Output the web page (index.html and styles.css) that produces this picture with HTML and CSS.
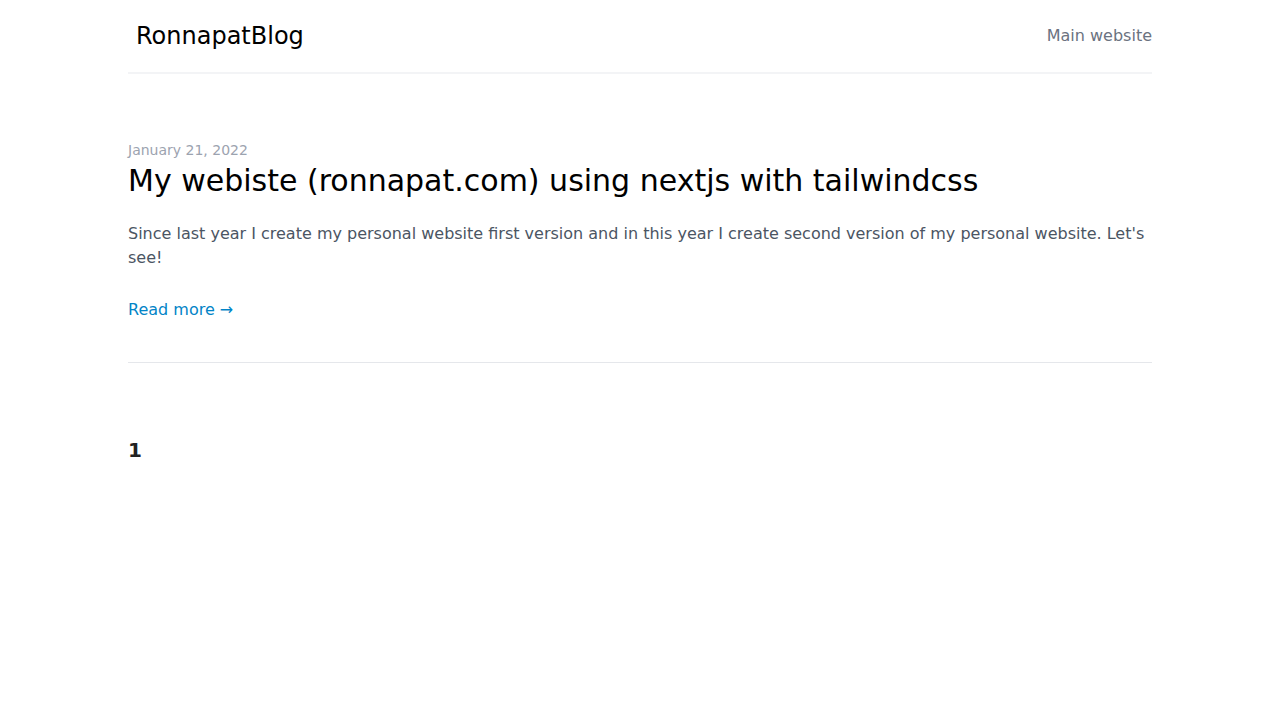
FILE: index.html
```html
<!DOCTYPE html>
<html lang="en">
<head>
<meta charset="utf-8">
<title>RonnapatBlog</title>
<link rel="stylesheet" href="styles.css">
</head>
<body>
<div class="container">
  <header class="header">
    <a class="brand" href="#">RonnapatBlog</a>
    <a class="nav-link" href="#">Main website</a>
  </header>
  <main class="main">
    <article class="post">
      <div class="date">January 21, 2022</div>
      <h2 class="post-title">My webiste (ronnapat.com) using nextjs with tailwindcss</h2>
      <p class="excerpt">Since last year I create my personal website first version and in this year I create second version of my personal website. Let's see!</p>
      <a class="read-more" href="#">Read more →</a>
    </article>
    <div class="pagination"><span class="page">1</span></div>
  </main>
</div>
</body>
</html>
```

FILE: styles.css
```css
* { box-sizing: border-box; }
html, body { margin: 0; padding: 0; background: #fff; }
body { font-family: "DejaVu Sans", sans-serif; color: #000; }
a { text-decoration: none; }
.container { width: 1024px; margin: 0 auto; }
.header {
  height: 74px;
  display: flex;
  align-items: center;
  justify-content: space-between;
  border-bottom: 2px solid #f3f4f6;
  padding: 1px 0 1px 8px;
}
.brand { font-size: 24px; line-height: 32px; color: #000; }
.nav-link { font-size: 16px; line-height: 24px; color: #6b7280; }
.main { padding-top: 66px; }
.post { padding-bottom: 40px; border-bottom: 1px solid #e5e7eb; }
.date { font-size: 14px; line-height: 20px; color: #9ca3af; }
.post-title { margin: 3px 0 0; font-size: 30px; line-height: 36px; font-weight: 400; color: #000; }
.excerpt { margin: 23px 0 0; font-size: 16px; line-height: 24px; color: #4b5563; }
.read-more { display: inline-block; margin-top: 28px; font-size: 16px; line-height: 24px; color: #0284c7; }
.pagination { padding-top: 73px; }
.page { font-size: 20px; line-height: 28px; font-weight: 700; color: #222; }
```
